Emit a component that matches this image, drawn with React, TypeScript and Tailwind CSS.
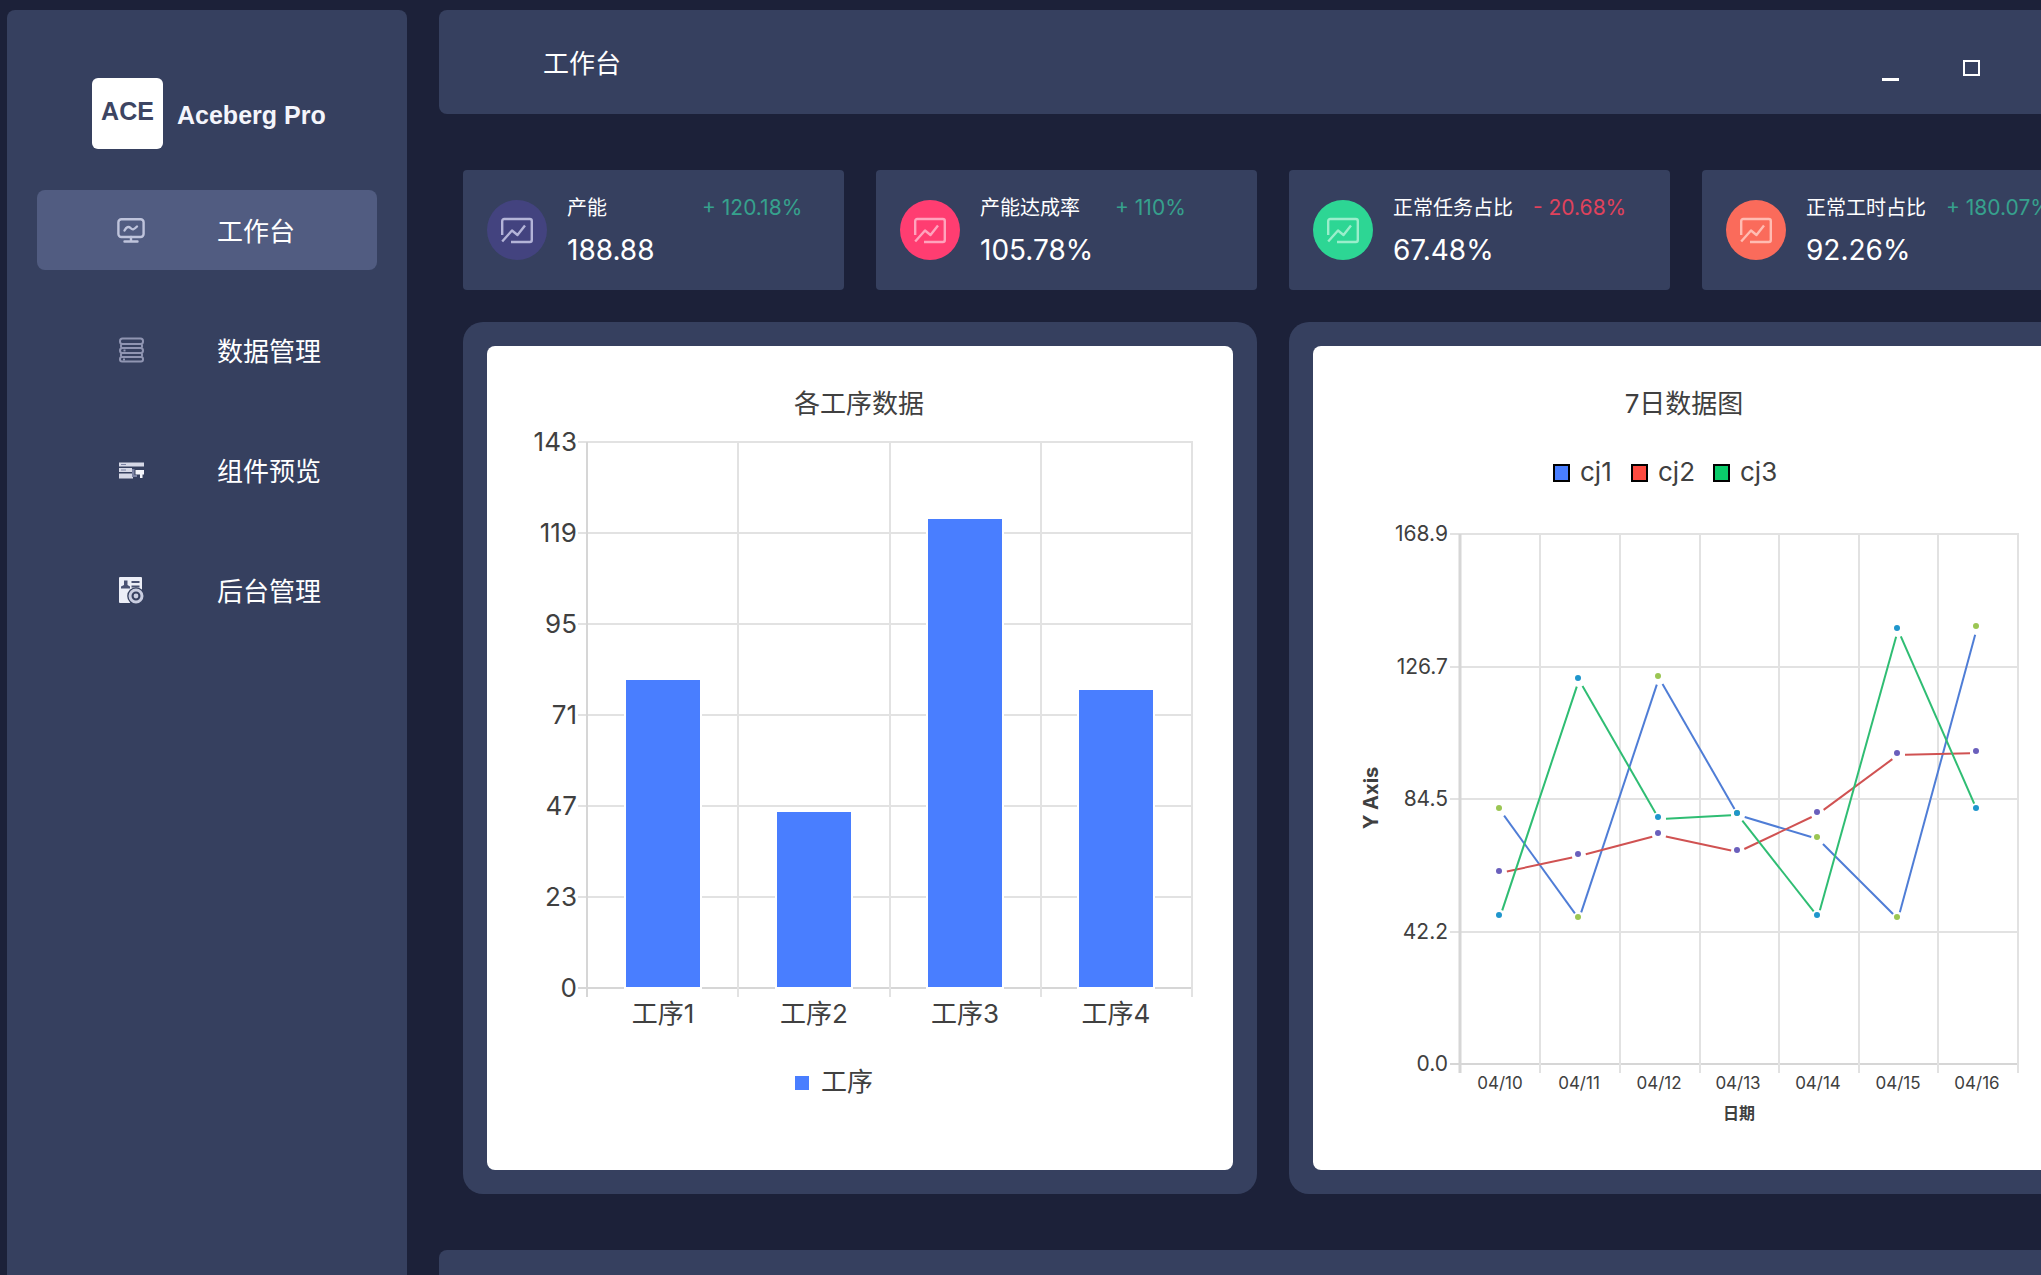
import React from 'react';

const text = 'fill-[#404040]';

const navItems = [
  { label: '工作台', icon: <MonitorIcon />, active: true },
  { label: '数据管理', icon: <StackIcon />, active: false },
  { label: '组件预览', icon: <WidgetIcon />, active: false },
  { label: '后台管理', icon: <AdminIcon />, active: false },
];

const stats = [
  { label: '产能', value: '188.88', delta: '+ 120.18%', up: true, circle: 'bg-[#43437f]', stroke: '#b4b4d8' },
  { label: '产能达成率', value: '105.78%', delta: '+ 110%', up: true, circle: 'bg-[#ff3d71]', stroke: '#ffa3bd' },
  { label: '正常任务占比', value: '67.48%', delta: '- 20.68%', up: false, circle: 'bg-[#2dd694]', stroke: '#9aeecb' },
  { label: '正常工时占比', value: '92.26%', delta: '+ 180.07%', up: true, circle: 'bg-[#fa6b5b]', stroke: '#ffbcb2' },
];

function MonitorIcon() {
  return (
    <svg className="size-7" viewBox="0 0 28 28" fill="none" stroke="#bfc4dc" strokeWidth="2.4" strokeLinecap="round" strokeLinejoin="round" aria-hidden="true">
      <rect x="1.400" y="3.200" width="25.200" height="17.800" rx="3" />
      <path d="M7.500 14.500c2-3.500 4-4.500 6-2.500s3 2 6.500-1.500M14 21v4M7.500 25.500h13" />
    </svg>
  );
}

function StackIcon() {
  return (
    <svg className="size-7" viewBox="0 0 28 28" fill="none" stroke="#9095b2" strokeWidth="2" aria-hidden="true">
      <rect x="3" y="2.500" width="23" height="5.500" rx="2.500" />
      <rect x="3" y="12" width="23" height="5" rx="2.500" />
      <rect x="3" y="21" width="23" height="4.500" rx="2" />
      <path d="M5 8c-1.500 1-1.500 3 0 4M5 17c-1.500 1-1.500 3 0 4M24 8c1.500 1 1.500 3 0 4M24 17c1.500 1 1.500 3 0 4M6.500 14.500h2M6 23.500h2" />
    </svg>
  );
}

function WidgetIcon() {
  return (
    <svg className="size-7" viewBox="0 0 28 28" aria-hidden="true">
      <path fill="#d6d8e6" d="M2 6.500h25v4H2zM2 12h13v4H2zM2 17.500h14v5H2z" />
      <path fill="#f4f5fb" d="M18.500 14h8.500v4.500h-1.500V22h-2.500v-3.500h-4.500z" />
      <path fill="#7c83a3" d="M4 8h5v1H4zM4 13.500h5v1H4zM15 13h2.500v6H20v2h-5z" />
    </svg>
  );
}

function AdminIcon() {
  return (
    <svg className="size-7" viewBox="0 0 28 28" aria-hidden="true">
      <rect x="2" y="1" width="23" height="26" rx="1" fill="#eceef7" />
      <path fill="#4a5273" d="M7 4.500h3.500v4.500l2.500 1.500v2H4v-2l3-1.500zM14.500 5h8v2h-8zM14.500 9.500h8v2h-8z" />
      <circle cx="19" cy="20" r="8.800" fill="#36405f" />
      <circle cx="19" cy="20" r="6" fill="none" stroke="#c9cde0" strokeWidth="3" />
      <circle cx="19" cy="20" r="2.400" fill="#c9cde0" />
    </svg>
  );
}

function TrendIcon({ stroke }: { stroke: string }) {
  return (
    <svg className="h-7 w-8" viewBox="0 0 32 28" fill="none" stroke={stroke} strokeWidth="2.4" strokeLinejoin="round" aria-hidden="true">
      <path d="M1.200 19V5a2 2 0 0 1 2-2h25.600a2 2 0 0 1 2 2v19a2 2 0 0 1-2 2H10" />
      <path d="M1.200 25.500L11 14.500l5.500 4.500L24 9.500" />
    </svg>
  );
}

function Sidebar() {
  return (
    <aside className="flex w-[400px] shrink-0 flex-col rounded-t-lg bg-[#36405f] px-[30px]">
      <div className="mt-[68px] flex items-center gap-[14px] pl-[55px]">
        <div className="flex size-[71px] items-center justify-center rounded-md bg-white pb-1 font-['Liberation_Sans',sans-serif] text-[25px] font-bold text-[#3d4562]">ACE</div>
        <div className="pt-1 font-['Liberation_Sans',sans-serif] text-[25px] font-bold text-[#f4f5fb]">Aceberg Pro</div>
      </div>
      <nav className="mt-[41px] flex flex-col gap-10">
        {navItems.map((item) => (
          <button
            key={item.label}
            type="button"
            className={
              item.active
                ? 'flex h-20 items-center gap-[72px] rounded-lg bg-[#515c81] pl-20 text-[26px] leading-9 text-white'
                : 'flex h-20 items-center gap-[72px] rounded-lg pl-20 text-[26px] leading-9 text-white'
            }
          >
            {item.icon}
            <span className="pt-1">{item.label}</span>
          </button>
        ))}
      </nav>
    </aside>
  );
}

function Header() {
  return (
    <header className="flex h-[104px] items-center justify-between rounded-lg bg-[#36405f] pl-[104px] pr-[46px]">
      <h1 className="pt-1 text-[26px] leading-9 text-white">工作台</h1>
      <div className="flex items-center gap-16 pt-3">
        <button type="button" aria-label="最小化" className="flex h-[26px] w-[17px] items-end">
          <span className="h-[3px] w-full bg-white" />
        </button>
        <button type="button" aria-label="最大化" className="flex h-[26px] w-[17px] items-center">
          <span className="h-4 w-full border-2 border-white" />
        </button>
        <button type="button" aria-label="关闭" className="flex h-[26px] w-[17px] items-center">
          <svg className="size-4" viewBox="0 0 16 16" stroke="#fff" strokeWidth="2" aria-hidden="true">
            <path d="M1 1l14 14M15 1L1 15" />
          </svg>
        </button>
      </div>
    </header>
  );
}

function StatCard({ stat }: { stat: (typeof stats)[number] }) {
  return (
    <article className="flex h-[120px] items-center gap-5 rounded bg-[#36405f] px-6">
      <div className={`flex size-[60px] shrink-0 items-center justify-center rounded-full ${stat.circle}`}>
        <TrendIcon stroke={stat.stroke} />
      </div>
      <div className="flex flex-col gap-2 whitespace-nowrap pt-1">
        <div className="flex items-center gap-5 leading-7">
          <span className="min-w-[115px] text-xl leading-7 text-white">{stat.label}</span>
          <span className={stat.up ? 'text-[21px] leading-7 text-[#36a18d]' : 'text-[21px] leading-7 text-[#e0425c]'}>{stat.delta}</span>
        </div>
        <div className="text-[28px] leading-10 text-white">{stat.value}</div>
      </div>
    </article>
  );
}

const bars = [
  { label: '工序1', top: 334 },
  { label: '工序2', top: 466 },
  { label: '工序3', top: 173 },
  { label: '工序4', top: 344 },
];

function BarChart() {
  const rows = [143, 119, 95, 71, 47, 23, 0];
  return (
    <svg className="block w-full" viewBox="0 0 746 824" role="img" aria-label="各工序数据">
      <text className={text} x="372" y="67" textAnchor="middle" fontSize="26">各工序数据</text>
      {rows.map((value, i) => (
        <g key={value}>
          <path d={`M91 ${96 + i * 91}H706`} stroke={value === 0 ? '#d6d6d6' : '#e2e2e2'} strokeWidth="2" />
          <text className={text} x="90" y={105 + i * 91} textAnchor="end" fontSize="26">{value}</text>
        </g>
      ))}
      {[100, 251, 403, 554, 705].map((x) => (
        <path key={x} d={`M${x} 96V651`} stroke={x === 100 ? '#d6d6d6' : '#e2e2e2'} strokeWidth="2" />
      ))}
      {bars.map((bar, i) => (
        <g key={bar.label}>
          <rect x={138 + i * 151} y={bar.top - 1} width="76" height={643 - bar.top} fill="#497eff" stroke="#fff" strokeWidth="2" />
          <text className={text} x={176 + i * 151} y="677" textAnchor="middle" fontSize="26">{bar.label}</text>
        </g>
      ))}
      <rect x="308" y="730" width="14" height="14" fill="#497eff" />
      <text className={text} x="334" y="745" fontSize="26">工序</text>
    </svg>
  );
}

const dotXs = [186, 265, 345, 424, 504, 584, 663];
const lines = [
  { name: 'cj1', swatch: '#497eff', line: '#4f7dd6', dot: '#9bc653', ys: [462, 571, 330, 467, 491, 571, 280], legendX: 240 },
  { name: 'cj2', swatch: '#fd4a40', line: '#d05252', dot: '#6a5fbc', ys: [525, 508, 487, 504, 466, 407, 405], legendX: 318 },
  { name: 'cj3', swatch: '#0acc6a', line: '#2fbd73', dot: '#1f96cc', ys: [569, 332, 471, 467, 569, 282, 462], legendX: 400 },
];

// Each segment stops short of its two points, so that the markers stand free.
function segment(ys: number[], i: number) {
  const [x1, y1, x2, y2] = [dotXs[i] + 1, ys[i] + 2, dotXs[i + 1] + 1, ys[i + 1] + 2];
  const length = Math.hypot(x2 - x1, y2 - y1);
  const dx = ((x2 - x1) / length) * 7;
  const dy = ((y2 - y1) / length) * 7;
  return `M${x1 + dx} ${y1 + dy}L${x2 - dx} ${y2 - dy}`;
}

function LineChart() {
  const rows = ['168.9', '126.7', '84.5', '42.2', '0.0'];
  const rowYs = [188, 321, 453, 586, 718];
  const columns = [147, 227, 307, 387, 466, 546, 625, 705];
  const days = ['04/10', '04/11', '04/12', '04/13', '04/14', '04/15', '04/16'];
  return (
    <svg className="block w-full" viewBox="0 0 746 824" role="img" aria-label="7日数据图">
      <text className={text} x="371" y="67" textAnchor="middle" fontSize="26">7日数据图</text>
      {lines.map((s) => (
        <g key={s.name}>
          <rect x={s.legendX + 1} y="119" width="15" height="16" fill={s.swatch} stroke="#000" strokeWidth="2" />
          <text className={text} x={s.legendX + 27} y="135" fontSize="26">{s.name}</text>
        </g>
      ))}
      {rows.map((value, i) => (
        <g key={value}>
          <path d={`M137 ${rowYs[i]}H706`} stroke={i === 4 ? '#d6d6d6' : '#e2e2e2'} strokeWidth="2" />
          <text className={text} x="135" y={rowYs[i] + 7} textAnchor="end" fontSize="21">{value}</text>
        </g>
      ))}
      {columns.map((x, i) => (
        <path key={x} d={`M${x} 188V727`} stroke={i === 0 ? '#d6d6d6' : '#e2e2e2'} strokeWidth={i === 0 ? 3 : 2} />
      ))}
      {days.map((day, i) => (
        <text key={day} className={text} x={dotXs[i] + 1} y="743" textAnchor="middle" fontSize="17">{day}</text>
      ))}
      <text className={text} x="426" y="773" textAnchor="middle" fontSize="16" fontWeight="700">日期</text>
      <text className={text} transform="translate(65 452) rotate(-90)" textAnchor="middle" fontSize="20" fontWeight="700">Y Axis</text>
      {lines.map((s) => (
        <g key={s.name}>
          {dotXs.slice(1).map((x, i) => (
            <path key={x} d={segment(s.ys, i)} stroke={s.line} strokeWidth="2" fill="none" />
          ))}
          {dotXs.map((x, i) => (
            <circle key={x} cx={x} cy={s.ys[i]} r="3" fill={s.dot} />
          ))}
        </g>
      ))}
    </svg>
  );
}

function ChartPanel({ children }: { children: React.ReactNode }) {
  return (
    <section className="rounded-[20px] bg-[#36405f] p-6">
      <div className="overflow-hidden rounded-lg bg-white">{children}</div>
    </section>
  );
}

export default function App() {
  return (
    <div className="h-screen overflow-hidden bg-[#1c2139] font-[Inter,'Noto_Sans_CJK_SC',sans-serif]">
      <div className="flex h-full min-w-[2107px] gap-8 pl-[7px] pt-[10px]">
        <Sidebar />
        <main className="flex min-w-0 grow flex-col">
          <Header />
          <div className="flex flex-col gap-8 px-6 py-14">
            <div className="grid grid-cols-4 gap-8">
              {stats.map((stat) => (
                <StatCard key={stat.label} stat={stat} />
              ))}
            </div>
            <div className="grid grid-cols-2 gap-8">
              <ChartPanel>
                <BarChart />
              </ChartPanel>
              <ChartPanel>
                <LineChart />
              </ChartPanel>
            </div>
          </div>
          <section className="grow rounded-t-lg bg-[#36405f]" />
        </main>
      </div>
    </div>
  );
}
